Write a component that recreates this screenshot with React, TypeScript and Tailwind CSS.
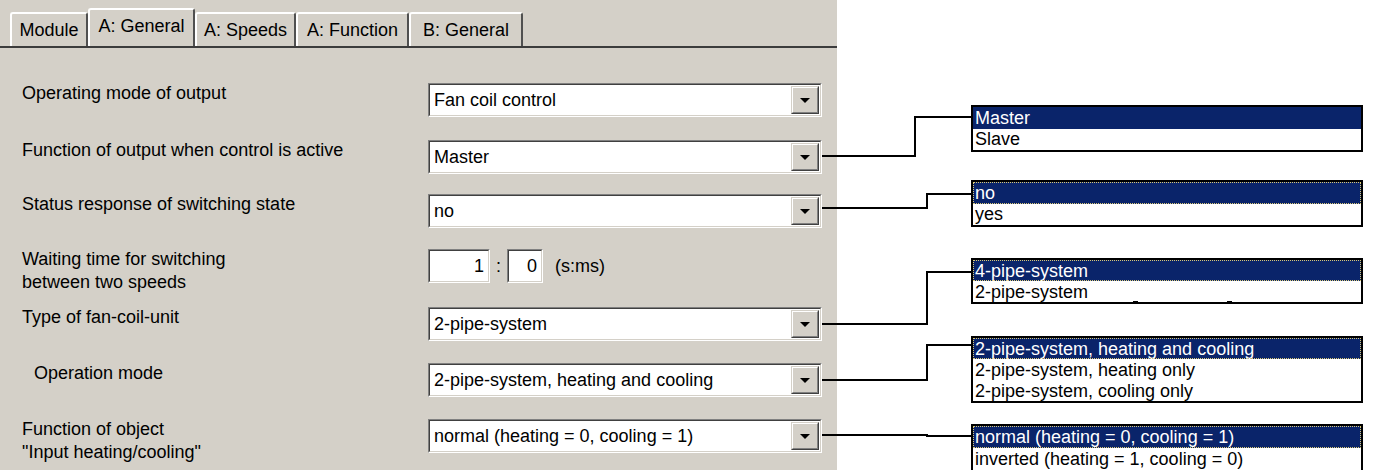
import React from 'react';

// Win2000-style parameter page with its option lists called out on the right.

const tabs = [
  { label: 'Module', w: 'w-[78px]' },
  { label: 'A: General', w: 'w-[107px]', active: true },
  { label: 'A: Speeds', w: 'w-[101px]' },
  { label: 'A: Function', w: 'w-[113px]' },
  { label: 'B: General', w: 'w-[114px]' },
];

function Arrow() {
  return (
    <svg width="10" height="5" viewBox="0 0 10 5">
      <polygon points="0,0 10,0 5,5" fill="#000" />
    </svg>
  );
}

// sunken 2px frame used by combo boxes and edit fields
function Sunken({ className, children }: { className: string; children: React.ReactNode }) {
  return (
    <div className={`flex border border-t-[#808080] border-l-[#808080] border-b-white border-r-white ${className}`}>
      <div className="flex flex-1 bg-white border border-t-[#404040] border-l-[#404040] border-b-[#d4d0c8] border-r-[#d4d0c8]">
        {children}
      </div>
    </div>
  );
}

function Combo({ value }: { value: string }) {
  return (
    <Sunken className="h-[34px] w-[394px]">
      <div className="flex-1 flex items-center pl-[4px] whitespace-nowrap">{value}</div>
      <div className="w-[28px] m-[1px] flex border border-t-[#d4d0c8] border-l-[#d4d0c8] border-b-[#404040] border-r-[#404040]">
        <div className="flex-1 flex items-center justify-center bg-[#d4d0c8] border border-t-white border-l-white border-b-[#808080] border-r-[#808080]">
          <Arrow />
        </div>
      </div>
    </Sunken>
  );
}

function TimeField() {
  return (
    <div className="flex items-center">
      <Sunken className="h-[34px] w-[62px]">
        <div className="flex-1 flex items-center justify-end pr-[4px]">1</div>
      </Sunken>
      <span className="w-[17px] text-center">:</span>
      <Sunken className="h-[34px] w-[36px]">
        <div className="flex-1 flex items-center justify-end pr-[4px]">0</div>
      </Sunken>
      <span className="ml-[12px]">(s:ms)</span>
    </div>
  );
}

type Row = { label: React.ReactNode; control: React.ReactNode; mt: string; indent?: boolean };

const rows: Row[] = [
  { label: 'Operating mode of output', control: <Combo value="Fan coil control" />, mt: 'mt-[35px]' },
  { label: 'Function of output when control is active', control: <Combo value="Master" />, mt: 'mt-[23px]' },
  { label: 'Status response of switching state', control: <Combo value="no" />, mt: 'mt-[20px]' },
  {
    label: (
      <>
        Waiting time for switching
        <br />
        between two speeds
      </>
    ),
    control: <TimeField />,
    mt: 'mt-[21px]',
  },
  { label: 'Type of fan-coil-unit', control: <Combo value="2-pipe-system" />, mt: 'mt-[24px]' },
  { label: 'Operation mode', control: <Combo value="2-pipe-system, heating and cooling" />, mt: 'mt-[22px]', indent: true },
  {
    label: (
      <>
        Function of object
        <br />
        "Input heating/cooling"
      </>
    ),
    control: <Combo value="normal (heating = 0, cooling = 1)" />,
    mt: 'mt-[22px]',
  },
];

type ListBox = { top: string; items: string[]; focus?: boolean; rowH: string; marks?: boolean };

const lists: ListBox[] = [
  { top: 'top-[105px]', items: ['Master', 'Slave'], rowH: 'h-[21.5px]' },
  { top: 'top-[180px]', items: ['no', 'yes'], rowH: 'h-[21.5px]', focus: true },
  { top: 'top-[258px]', items: ['4-pipe-system', '2-pipe-system'], rowH: 'h-[21px]', focus: true, marks: true },
  {
    top: 'top-[336px]',
    items: ['2-pipe-system, heating and cooling', '2-pipe-system, heating only', '2-pipe-system, cooling only'],
    rowH: 'h-[21px]',
    focus: true,
  },
  {
    top: 'top-[424px]',
    items: ['normal (heating = 0, cooling = 1)', 'inverted (heating = 1, cooling = 0)'],
    rowH: 'h-[22px]',
    focus: true,
  },
];

const connectors = [
  '822,156 915,156 915,117 971,117',
  '822,208 927,208 927,194 971,194',
  '822,324 927,324 927,272 971,272',
  '822,380 927,380 927,345 971,345',
  '822,435 927,435 927,436 971,436',
];

export default function App() {
  return (
    <div className="relative flex w-[1373px] h-[470px] overflow-hidden bg-white text-black text-[18px] leading-[22px] font-['Liberation_Sans',Arial,sans-serif]">
      <div className="w-[837px] shrink-0 bg-[#d4d0c8] flex flex-col">
        <div className="h-[46px] flex items-end pl-[10px]">
          {tabs.map((t) => (
            <div
              key={t.label}
              className={`${t.w} flex justify-center whitespace-nowrap rounded-t-[3px] border-t-2 border-l-2 border-r-2 border-t-white border-l-white border-r-[#505050] ${
                t.active ? 'h-[38px] pt-[5px]' : 'h-[34px] pt-[5px]'
              }`}
            >
              {t.label}
            </div>
          ))}
        </div>
        <div className="flex-1 border-t-2 border-t-[#3c3c3c] pl-[22px] flex flex-col">
          {rows.map((r, i) => (
            <div key={i} className={`flex items-start h-[34px] shrink-0 ${r.mt}`}>
              <div className={`w-[406px] shrink-0 -mt-[1px] leading-[23px] ${r.indent ? 'pl-[12px]' : ''}`}>{r.label}</div>
              {r.control}
            </div>
          ))}
        </div>
      </div>

      <svg className="absolute inset-0 pointer-events-none" width="1373" height="470">
        {connectors.map((p) => (
          <polyline key={p} points={p} fill="none" stroke="#000" strokeWidth="2" />
        ))}
      </svg>

      {lists.map((l) => (
        <div key={l.top} className={`absolute left-[971px] ${l.top} w-[392px] bg-white border-2 border-black`}>
          {l.items.map((it, i) => (
            <div
              key={it}
              className={`${l.rowH} pl-[2px] flex items-center whitespace-nowrap ${
                i === 0 ? 'bg-[#0a246a] text-white' : ''
              } ${i === 0 && l.focus ? 'outline-1 outline-dotted outline-[#d8c878] -outline-offset-1' : ''}`}
            >
              {it}
            </div>
          ))}
          {l.marks && (
            <div className="absolute -bottom-[2px] left-0 right-0 h-[3px]">
              <div className="absolute left-[160px] w-[5px] h-[3px] bg-black" />
              <div className="absolute left-[254px] w-[5px] h-[3px] bg-black" />
            </div>
          )}
        </div>
      ))}
    </div>
  );
}
